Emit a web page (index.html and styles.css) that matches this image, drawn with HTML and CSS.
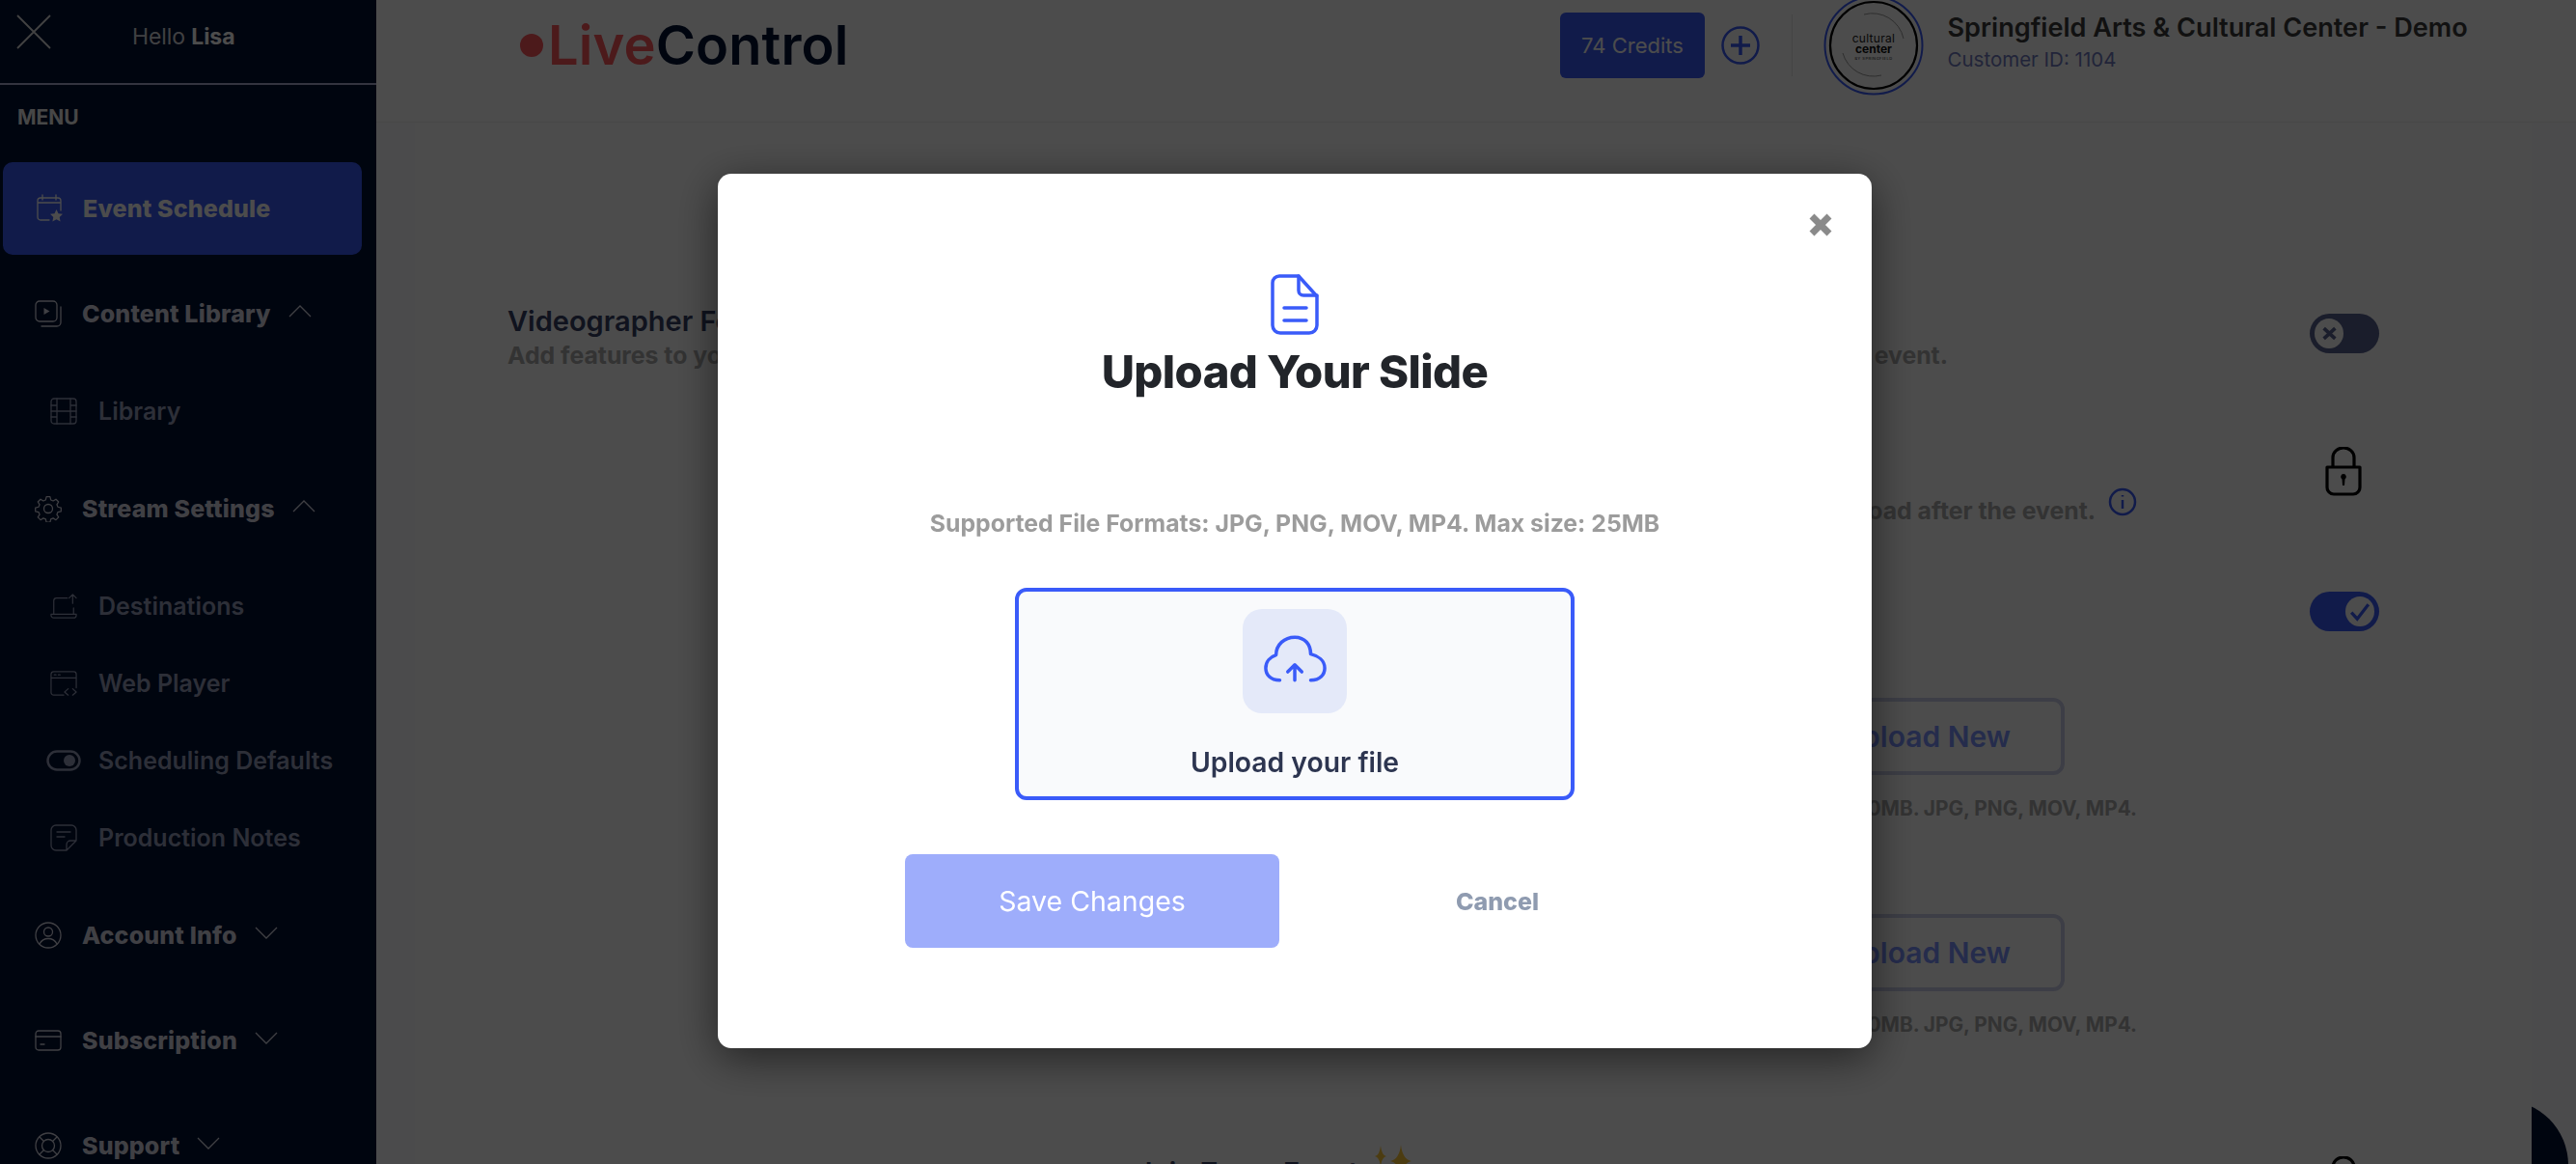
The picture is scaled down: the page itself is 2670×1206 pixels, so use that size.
FILE: index.html
```html
<!DOCTYPE html>
<html lang="en">
<head>
<meta charset="utf-8">
<title>LiveControl</title>
<link rel="stylesheet" href="styles.css">
</head>
<body>
<div class="app">
  <aside class="sidebar">
    <div class="side-top">
      <svg class="side-close" viewBox="0 0 36 36"><path d="M1 1 35 35M35 1 1 35"/></svg>
      <p class="hello">Hello <b>Lisa</b></p>
    </div>
    <p class="menu-label">MENU</p>
    <nav class="nav">
      <a class="nav-parent active">
        <svg class="ico" viewBox="0 0 28 30"><path d="M7 1v5M21 1v5M2 9h24M14 27H5a3 3 0 0 1-3-3V7a3 3 0 0 1 3-3h18a3 3 0 0 1 3 3v10"/><path class="fill" d="m21.5 16 2 4.300 4.500.5-3.300 3.100.9 4.600-4.100-2.300-4.100 2.300.9-4.600L15 20.800l4.500-.5z"/></svg>
        <span>Event Schedule</span>
      </a>
      <a class="nav-parent">
        <svg class="ico" viewBox="0 0 28 28"><rect x="1" y="1" width="22" height="21" rx="4"/><path d="M27 7v16a4 4 0 0 1-4 4H7"/><path class="fill" d="m9.500 8 6 3.500-6 3.500z"/></svg>
        <span>Content Library</span>
        <svg class="chev" viewBox="0 0 24 13"><path d="M1 12 12 1l11 11"/></svg>
      </a>
      <div class="subnav">
        <a class="nav-sub">
          <svg class="ico" viewBox="0 0 28 28"><rect x="1" y="1" width="26" height="26" rx="3"/><path d="M7 1v26M21 1v26M1 8h6M1 14h26M1 20h6M21 8h6M21 20h6"/></svg>
          <span>Library</span>
        </a>
      </div>
      <a class="nav-parent">
        <svg class="ico" viewBox="0 0 28 28"><circle cx="14" cy="14" r="4.500"/><path d="m12 1.500 4 0 .8 3.500 2.600 1.100 3-1.900 2.900 2.900-1.900 3 1.100 2.600 3.500.8v4l-3.500.8-1.100 2.600 1.900 3-2.900 2.900-3-1.900-2.600 1.100-.8 3.500h-4l-.8-3.500-2.600-1.100-3 1.900-2.900-2.900 1.900-3-1.100-2.600-3.500-.8v-4l3.500-.8 1.100-2.600-1.900-3 2.900-2.900 3 1.900 2.600-1.100z" transform="translate(.7 .2) scale(.95)"/></svg>
        <span>Stream Settings</span>
        <svg class="chev" viewBox="0 0 24 13"><path d="M1 12 12 1l11 11"/></svg>
      </a>
      <div class="subnav">
        <a class="nav-sub">
          <svg class="ico" viewBox="0 0 30 28"><path d="M19 5H7a3 3 0 0 0-3 3v15M26 16v7M1 23h28v1a3 3 0 0 1-3 3H4a3 3 0 0 1-3-3zM25 11V1M21 5l4-4 4 4"/></svg>
          <span>Destinations</span>
        </a>
        <a class="nav-sub">
          <svg class="ico" viewBox="0 0 30 28"><path d="M15 27H4a3 3 0 0 1-3-3V4a3 3 0 0 1 3-3h22a3 3 0 0 1 3 3v15M1 8h28M4.500 4.500h2M9 4.500h2M20 20l-4 3.500 4 3.500M25 20l4 3.500-4 3.500"/></svg>
          <span>Web Player</span>
        </a>
        <a class="nav-sub">
          <svg class="ico ico-toggle" viewBox="0 0 36 22"><rect x="1.500" y="1.500" width="33" height="19" rx="9.500"/><circle class="fill" cx="24" cy="11" r="6"/></svg>
          <span>Scheduling Defaults</span>
        </a>
        <a class="nav-sub">
          <svg class="ico" viewBox="0 0 28 28"><path d="M17 27H6a5 5 0 0 1-5-5V6a5 5 0 0 1 5-5h16a5 5 0 0 1 5 5v11zM7 8h14M7 13h8M17 27v-6a4 4 0 0 1 4-4h6"/></svg>
          <span>Production Notes</span>
        </a>
      </div>
      <a class="nav-parent">
        <svg class="ico" viewBox="0 0 28 28"><circle cx="14" cy="14" r="13"/><circle cx="14" cy="10.500" r="4.500"/><path d="M5 23c2-4 5-5.500 9-5.500s7 1.500 9 5.500"/></svg>
        <span>Account Info</span>
        <svg class="chev" viewBox="0 0 24 13"><path d="M1 1l11 11L23 1"/></svg>
      </a>
      <a class="nav-parent">
        <svg class="ico" viewBox="0 0 28 22"><rect x="1" y="1" width="26" height="20" rx="3"/><path d="M1 7h26M6 15h4"/></svg>
        <span>Subscription</span>
        <svg class="chev" viewBox="0 0 24 13"><path d="M1 1l11 11L23 1"/></svg>
      </a>
      <a class="nav-parent">
        <svg class="ico" viewBox="0 0 28 28"><circle cx="14" cy="14" r="13"/><circle cx="14" cy="14" r="6.500"/><path d="m5 5 4.500 4.500M23 5l-4.500 4.500M5 23l4.500-4.500M23 23l-4.500-4.500"/></svg>
        <span>Support</span>
        <svg class="chev" viewBox="0 0 24 13"><path d="M1 1l11 11L23 1"/></svg>
      </a>
    </nav>
  </aside>

  <div class="main">
    <header class="topbar">
      <div class="logo"><i class="logo-dot"></i><span class="logo-live">Live</span><span>Control</span></div>
      <div class="account">
        <a class="credits">74 Credits</a>
        <svg class="plus" viewBox="0 0 40 40"><circle cx="20" cy="20" r="18.500"/><path d="M20 10v20M10 20h20"/></svg>
        <i class="vsep"></i>
        <svg class="avatar" viewBox="0 0 104 104">
          <circle class="ring-blue" cx="52" cy="52" r="50.500"/>
          <circle class="ring-black" cx="52" cy="52" r="45"/>
          <path class="arc" d="M42 20A33 33 0 0 1 83 45M20 60A33 33 0 0 0 60 83"/>
          <text class="av-a" x="52" y="49" text-anchor="middle">cultural</text>
          <text class="av-b" x="52" y="60" text-anchor="middle">center</text>
          <text class="av-c" x="52" y="67" text-anchor="middle">BY SPRINGFIELD</text>
        </svg>
        <div class="org">
          <p class="org-name">Springfield Arts &amp; Cultural Center - Demo</p>
          <p class="org-id">Customer ID: 1104</p>
        </div>
      </div>
    </header>

    <section class="card">
      <div class="row row-one">
        <div class="row-text">
          <h3 class="row-title">Videographer Features</h3>
          <p class="desc desc-split"><span>Add features to your</span><span>event.</span></p>
        </div>
        <div class="toggle off"><i class="knob"><svg viewBox="0 0 16 16"><path d="m2.500 3 11 10M13.500 3l-11 10"/></svg></i></div>
      </div>

      <div class="row row-two">
        <div class="row-text with-lock">
          <p class="desc desc-end"><span>Download after the event.</span>
            <svg class="info" viewBox="0 0 30 30"><circle cx="15" cy="15" r="13"/><path d="M15 13v9M15 8v1.500"/></svg>
          </p>
        </div>
        <div class="control">
          <svg class="lock" viewBox="0 0 38 51"><path d="M8 21V11a11 10 0 0 1 22 0v10M2 21h34v21a7 7 0 0 1-7 7H9a7 7 0 0 1-7-7z"/><path class="lock-hole" d="M19 28a3 3 0 0 1 1.500 5.500L20 40h-2l-.5-6.500A3 3 0 0 1 19 28z"/></svg>
        </div>
      </div>

      <div class="row row-three">
        <div class="row-text"></div>
        <div class="toggle on"><i class="knob"><svg viewBox="0 0 20 20"><path d="m2 10.500 5.500 6L18 3"/></svg></i></div>
      </div>

      <div class="upload-block first">
        <a class="upload-new">Upload New</a>
        <p class="caption">Max size 250MB. JPG, PNG, MOV, MP4.</p>
      </div>
      <div class="upload-block second">
        <a class="upload-new">Upload New</a>
        <p class="caption">Max size 250MB. JPG, PNG, MOV, MP4.</p>
      </div>

      <div class="row row-last">
        <div class="join">
          <span>Join Zoom Event</span>
          <svg class="sparkle" viewBox="0 0 40 40"><path d="M7 1Q8 11 13 12 8 13 7 23 6 13 1 12 6 11 7 1zM28 0Q29.500 15 39 17 29.500 19 28 34 26.500 19 17 17 26.500 15 28 0z"/></svg>
        </div>
        <div class="control">
          <svg class="lock" viewBox="0 0 38 51"><path d="M8 21V11a11 10 0 0 1 22 0v10M2 21h34v21a7 7 0 0 1-7 7H9a7 7 0 0 1-7-7z"/></svg>
        </div>
      </div>
    </section>
    <i class="chat-bubble"></i>
  </div>
</div>

<div class="overlay">
  <div class="modal">
    <svg class="modal-close" viewBox="0 0 24 24"><path d="M3 3l18 18M21 3 3 21"/></svg>
    <svg class="doc-icon" viewBox="0 0 50 63"><path d="M9 2h20l19 21v30a8 8 0 0 1-8 8H10a8 8 0 0 1-8-8V9a7 7 0 0 1 7-7z"/><path d="M29 2v15a5 5 0 0 0 5 5h14M14 35h23M14 48h23"/></svg>
    <h2 class="modal-title">Upload Your Slide</h2>
    <p class="modal-sub">Supported File Formats: JPG, PNG, MOV, MP4. Max size: 25MB</p>
    <div class="dropzone">
      <div class="drop-tile">
        <svg class="cloud" viewBox="0 0 67 50"><path d="M17 48C7 48 2 42 2 35c0-7 5-12 11-14C13 10 22 2 33 2s17 8 17 18c8 2 15 7 15 15 0 7-5 13-15 13M33 48V32M25.500 39 33 31.500 40.500 39"/></svg>
      </div>
      <p class="drop-label">Upload your file</p>
    </div>
    <div class="modal-actions">
      <button class="btn-save">Save Changes</button>
      <button class="btn-cancel">Cancel</button>
    </div>
  </div>
</div>
</body>
</html>
```

FILE: styles.css
```css
* { box-sizing: border-box; }
html, body { margin: 0; height: 100%; overflow: hidden; }
body { font-family: Inter, "Liberation Sans", sans-serif; background: #fff; }
p, h2, h3 { margin: 0; }
svg { display: block; }

.app { display: flex; width: 2670px; height: 1206px; overflow: hidden; }

/* Sidebar */
.sidebar { width: 390px; flex: none; height: 100%; overflow: hidden; background: #001132; color: #fff; }
.side-top { height: 88px; display: flex; align-items: flex-start; border-bottom: 2px solid #aaadd2; padding: 15px 0 0 17px; }
.side-close { width: 36px; height: 36px; fill: none; stroke: #ddd; stroke-width: 1.800; }
.hello { margin: 8px 0 0 84px; font-size: 23px; line-height: 30px; font-weight: 400; color: #d8d8de; letter-spacing: -.1px; }
.hello b { font-weight: 700; color: #fff; }
.menu-label { margin: 22px 0 0 18px; font-size: 21px; line-height: 24px; font-weight: 700; color: #eee; }

.nav { margin-top: 34px; display: flex; flex-direction: column; gap: 13px; }
.nav-parent, .nav-sub { display: flex; align-items: center; }
.nav-parent { height: 96px; padding-left: 36px; font-size: 25px; font-weight: 800; letter-spacing: .15px; color: #d6d6e4; }
.nav-parent .ico { width: 28px; margin-right: 21px; }
.nav-parent.active { width: 372px; margin-left: 3px; padding-left: 34px; border-radius: 10px; background: #3a5bf9; color: #fff; }
.nav-sub { height: 80px; padding-left: 52px; font-size: 25px; font-weight: 600; color: #969ebb; }
.nav-sub .ico { width: 28px; margin-right: 22px; }
.ico { height: auto; flex: none; fill: none; stroke: currentColor; stroke-width: 1.300; stroke-linecap: round; stroke-linejoin: round; }
.ico .fill { fill: currentColor; stroke: none; }
.nav-sub .ico-toggle { width: 36px; margin: 0 18px 0 -4px; stroke-width: 2.500; }
.chev { width: 24px; height: 13px; margin: -6px 0 0 18px; fill: none; stroke: #d6d6e4; stroke-width: 1.300; }
.subnav { display: flex; flex-direction: column; }

/* Main */
.main { flex: 1; position: relative; display: flex; flex-direction: column; background: #fafcff; min-width: 0; }
.topbar { height: 127px; flex: none; display: flex; align-items: center; justify-content: space-between; padding: 0 111.500px 33px 149px; background: #fff; border-bottom: 1px solid #f0f0f0; position: relative; z-index: 1; }
.logo { display: flex; align-items: center; font-size: 56px; line-height: 60px; font-weight: 600; letter-spacing: .1px; color: #001132; }
.logo-dot { width: 24px; height: 24px; border-radius: 50%; background: #ff575d; margin-right: 5px; }
.logo-live { color: #ff575d; }
.account { display: flex; align-items: center; }
.credits { width: 150px; height: 68px; border-radius: 6px; background: #3a5bf9; color: #fff; display: flex; align-items: center; justify-content: center; font-size: 22px; font-weight: 400; }
.plus { width: 40px; height: 40px; margin-left: 17px; fill: none; stroke: #3a5bf9; stroke-width: 2.500; }
.plus path { stroke-width: 3.500; }
.vsep { width: 1px; height: 64px; margin-left: 33px; background: #e4e4e4; }
.avatar { width: 104px; height: 104px; margin-left: 32px; flex: none; }
.ring-blue { fill: none; stroke: #3a5bf9; stroke-width: 2; }
.ring-black { fill: #fff; stroke: #000; stroke-width: 2.200; }
.arc { fill: none; stroke: #999; stroke-width: 1; }
.av-a { font-size: 12px; letter-spacing: .3px; fill: #222; }
.av-b { font-size: 12px; font-weight: 700; fill: #111; }
.av-c { font-size: 4px; letter-spacing: .5px; fill: #222; }
.org { width: 540px; margin: -4px 0 0 24.500px; }
.org-name { font-size: 27.100px; line-height: 32px; font-weight: 600; color: #3a3a3a; white-space: nowrap; }
.org-id { font-size: 20.500px; line-height: 28px; margin-top: 3px; color: #717bc0; }

.card { flex: 1; margin: 0 46px 0 40px; min-height: 0; overflow: hidden; background: #fff; padding: 191px 179px 0 96px; position: relative; z-index: 1; }
.row { display: flex; align-items: flex-start; justify-content: space-between; margin-right: -179px; padding-right: 158px; }
.row-text { width: 1689px; }
.row-title { font-size: 29px; line-height: 30px; font-weight: 600; color: #364065; }
.desc { font-size: 24.800px; line-height: 30px; font-weight: 700; color: #aaa; white-space: nowrap; }
.desc-split { display: flex; justify-content: space-between; width: 1493px; margin-top: 5px; height: 40px; }
.desc-end { display: flex; justify-content: flex-end; align-items: flex-start; gap: 13px; }
.row-one { height: 70px; }
.row-two { margin-top: 75px; height: 81px; }
.row-three { margin-top: 69px; height: 41px; }
.with-lock { padding-top: 51px; }
.info { width: 30px; height: 30px; margin-top: -9px; fill: none; stroke: #3a5bf9; stroke-width: 2.500; }
.control { width: 72px; display: flex; justify-content: center; flex: none; padding-right: 3px; }
.lock { width: 38px; height: 51px; fill: none; stroke: #000; stroke-width: 3.200; stroke-linejoin: round; }
.lock-hole { fill: #000; stroke: none; }

.toggle { width: 72px; height: 41px; flex: none; border-radius: 21px; display: flex; align-items: center; padding: 0 5px; }
.row-one .toggle { margin-top: 7px; }
.toggle.off { background: #57618f; }
.toggle.on { background: #3a5bf9; justify-content: flex-end; }
.knob { width: 30px; height: 31px; border-radius: 50%; background: #fff; display: flex; align-items: center; justify-content: center; }
.knob svg { fill: none; stroke-width: 3; width: 22px; height: 22px; }
.off .knob svg { stroke: #57618f; stroke-width: 3.500; width: 17px; height: 17px; }
.on .knob svg { stroke: #3a5bf9; }

.upload-block { display: flex; flex-direction: column; align-items: flex-end; width: 1689px; }
.upload-block.first { margin-top: 69px; }
.upload-block.second { margin-top: 94px; }
.upload-new { width: 288px; height: 80px; margin-right: 75px; border: 4px solid #cbcfe9; border-radius: 12px; display: flex; align-items: center; justify-content: center; font-size: 30px; font-weight: 600; color: #7c93ff; }
.caption { margin-top: 20px; font-size: 20.800px; line-height: 30px; font-weight: 700; color: #aaa; white-space: nowrap; }

.row-last { margin-top: 121px; }
.join { display: flex; align-items: flex-start; margin-left: 652px; font-size: 28.500px; line-height: 34px; font-weight: 600; color: #364065; }
.sparkle { width: 40px; height: 40px; margin: -12px 0 0 16px; fill: #ffc83a; }

.chat-bubble { position: absolute; left: 2138px; top: 1140px; width: 134px; height: 134px; border-radius: 50%; background: #001132; }

/* Modal */
.overlay { position: fixed; inset: 0; z-index: 10; background: rgba(0,0,0,.7); padding: 180px 0 0 744px; }
.modal { position: relative; width: 1196px; height: 906px; padding-top: 104px; border-radius: 14px; background: #fff; box-shadow: 0 10px 45px rgba(0,0,0,.55); display: flex; flex-direction: column; align-items: center; }
.modal-close { position: absolute; top: 41px; right: 41px; width: 24px; height: 24px; fill: none; stroke: #8a8a8a; stroke-width: 7; }
.doc-icon { width: 50px; height: 63px; fill: none; stroke: #3a5bf9; stroke-width: 3.500; stroke-linecap: round; stroke-linejoin: round; }
.modal-title { margin: 13px 0 0; font-size: 47.200px; line-height: 50px; font-weight: 800; color: #22252a; letter-spacing: -.6px; }
.modal-sub { margin-top: 117px; font-size: 24.800px; line-height: 30px; font-weight: 700; color: #9c9c9c; }
.dropzone { margin: 52px 0 0; width: 580px; height: 220px; padding-top: 18px; border: 4px solid #3a5bf9; border-radius: 12px; background: #f9fafc; display: flex; flex-direction: column; align-items: center; }
.drop-tile { width: 108px; height: 108px; border-radius: 20px; background: #e4e9f9; display: flex; align-items: center; justify-content: center; }
.cloud { width: 65px; height: 49px; margin-top: -5px; fill: none; stroke: #3a5bf9; stroke-width: 3.600; stroke-linecap: round; stroke-linejoin: round; }
.drop-label { margin-top: 35px; font-size: 28.300px; line-height: 32px; font-weight: 600; color: #2d3550; }
.modal-actions { align-self: flex-start; margin: 56px 0 0 194px; display: flex; align-items: center; }
.btn-save { width: 388px; height: 97px; border: 0; border-radius: 8px; background: #9eadfb; color: #fff; font: 400 28.500px Inter, "Liberation Sans", sans-serif; }
.btn-cancel { width: 86px; margin-left: 183px; padding: 0; border: 0; background: none; color: #8f9bb0; font: 800 25px Inter, "Liberation Sans", sans-serif; white-space: nowrap; display: flex; justify-content: center; }
```
